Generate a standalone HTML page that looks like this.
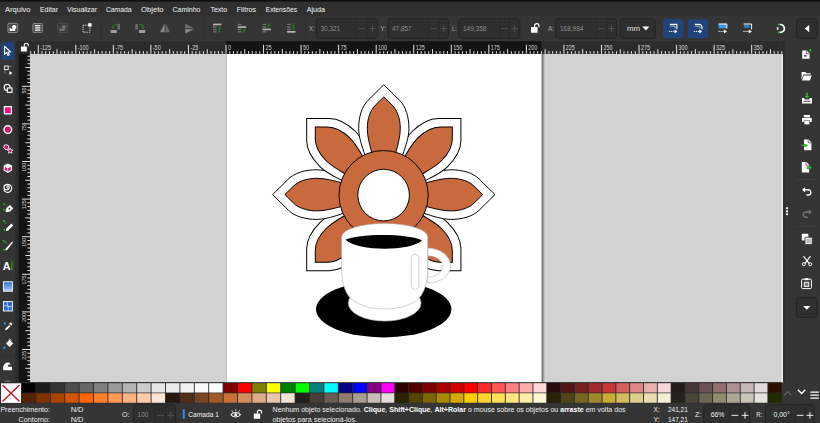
<!DOCTYPE html><html><head><meta charset="utf-8"><title>Inkscape</title><style>html,body{margin:0;padding:0;background:#353535;overflow:hidden}svg{display:block}text{font-family:"Liberation Sans",sans-serif}</style></head><body>
<svg width="820" height="423" viewBox="0 0 820 423">
<rect width="820" height="423" fill="#353535"/>
<rect x="0" y="0" width="820" height="15.5" fill="#303030"/>
<rect x="0" y="0" width="820" height="1.6" fill="#101010"/>
<text x="5" y="11.6" font-size="8" fill="#f4f4f4" textLength="25.5" lengthAdjust="spacingAndGlyphs">Arquivo</text>
<text x="40" y="11.6" font-size="8" fill="#f4f4f4" textLength="18.0" lengthAdjust="spacingAndGlyphs">Editar</text>
<text x="67" y="11.6" font-size="8" fill="#f4f4f4" textLength="30.0" lengthAdjust="spacingAndGlyphs">Visualizar</text>
<text x="106" y="11.6" font-size="8" fill="#f4f4f4" textLength="25.5" lengthAdjust="spacingAndGlyphs">Camada</text>
<text x="141" y="11.6" font-size="8" fill="#f4f4f4" textLength="22.5" lengthAdjust="spacingAndGlyphs">Objeto</text>
<text x="172.5" y="11.6" font-size="8" fill="#f4f4f4" textLength="28.0" lengthAdjust="spacingAndGlyphs">Caminho</text>
<text x="210.5" y="11.6" font-size="8" fill="#f4f4f4" textLength="16.5" lengthAdjust="spacingAndGlyphs">Texto</text>
<text x="236.7" y="11.6" font-size="8" fill="#f4f4f4" textLength="19.3" lengthAdjust="spacingAndGlyphs">Filtros</text>
<text x="265.7" y="11.6" font-size="8" fill="#f4f4f4" textLength="31.3" lengthAdjust="spacingAndGlyphs">Extensões</text>
<text x="306.7" y="11.6" font-size="8" fill="#f4f4f4" textLength="18.3" lengthAdjust="spacingAndGlyphs">Ajuda</text>
<rect x="30" y="54" width="753.3" height="328.3" fill="#d2d2d2"/>
<defs><linearGradient id="sh" x1="0" x2="1" y1="0" y2="0"><stop offset="0" stop-color="#000" stop-opacity="0.5"/><stop offset="1" stop-color="#000" stop-opacity="0"/></linearGradient>
<clipPath id="cv"><rect x="30" y="54" width="753.3" height="328.3"/></clipPath></defs>
<rect x="541.8" y="54" width="3.2" height="328.3" fill="url(#sh)"/>
<rect x="541.3" y="54" width="0.9" height="328.3" fill="#4c4c4c"/>
<rect x="226.2" y="54" width="315.7" height="328.3" fill="#9a9a9a"/>
<rect x="226.7" y="54" width="314.7" height="328.3" fill="#ffffff"/>
<g clip-path="url(#cv)"><g transform="translate(383.8,194.6)" stroke="#000" stroke-width="0.98" stroke-linejoin="miter"><g transform="scale(1.006,0.994)">
<g transform="rotate(180)"><path d="M0,-110.5 L-15.80,-94.70 C-21.60,-88.90 -25.00,-78.50 -25.00,-66.50 C-25.00,-57.50 -21.50,-48.50 -19.00,-40.50 L0,0 L19.00,-40.50 C21.50,-48.50 25.00,-57.50 25.00,-66.50 C25.00,-78.50 21.60,-88.90 15.80,-94.70 L0.00,-110.50 Z" fill="#fff"/><path d="M0,-98.3 L-8.40,-89.90 C-12.80,-85.50 -16.40,-77.30 -16.40,-66.60 C-16.40,-58.30 -14.00,-50.30 -12.00,-42.30 L0,0 L12.00,-42.30 C14.00,-50.30 16.40,-58.30 16.40,-66.60 C16.40,-77.30 12.80,-85.50 8.40,-89.90 L0.00,-98.30 Z" fill="#c8693e"/></g>
<g transform="rotate(135)"><path d="M0,-108.4 L-15.80,-92.60 C-21.60,-86.80 -25.00,-76.40 -25.00,-64.40 C-25.00,-55.40 -21.50,-46.40 -19.00,-38.40 L0,0 L19.00,-38.40 C21.50,-46.40 25.00,-55.40 25.00,-64.40 C25.00,-76.40 21.60,-86.80 15.80,-92.60 L0.00,-108.40 Z" fill="#fff"/><path d="M0,-96.3 L-8.40,-87.90 C-12.80,-83.50 -16.40,-75.30 -16.40,-64.60 C-16.40,-56.30 -14.00,-48.30 -12.00,-40.30 L0,0 L12.00,-40.30 C14.00,-48.30 16.40,-56.30 16.40,-64.60 C16.40,-75.30 12.80,-83.50 8.40,-87.90 L0.00,-96.30 Z" fill="#c8693e"/></g>
<g transform="rotate(225)"><path d="M0,-108.4 L-15.80,-92.60 C-21.60,-86.80 -25.00,-76.40 -25.00,-64.40 C-25.00,-55.40 -21.50,-46.40 -19.00,-38.40 L0,0 L19.00,-38.40 C21.50,-46.40 25.00,-55.40 25.00,-64.40 C25.00,-76.40 21.60,-86.80 15.80,-92.60 L0.00,-108.40 Z" fill="#fff"/><path d="M0,-96.3 L-8.40,-87.90 C-12.80,-83.50 -16.40,-75.30 -16.40,-64.60 C-16.40,-56.30 -14.00,-48.30 -12.00,-40.30 L0,0 L12.00,-40.30 C14.00,-48.30 16.40,-56.30 16.40,-64.60 C16.40,-75.30 12.80,-83.50 8.40,-87.90 L0.00,-96.30 Z" fill="#c8693e"/></g>
<g transform="rotate(90)"><path d="M0,-110.5 L-15.80,-94.70 C-21.60,-88.90 -25.00,-78.50 -25.00,-66.50 C-25.00,-57.50 -21.50,-48.50 -19.00,-40.50 L0,0 L19.00,-40.50 C21.50,-48.50 25.00,-57.50 25.00,-66.50 C25.00,-78.50 21.60,-88.90 15.80,-94.70 L0.00,-110.50 Z" fill="#fff"/><path d="M0,-98.3 L-8.40,-89.90 C-12.80,-85.50 -16.40,-77.30 -16.40,-66.60 C-16.40,-58.30 -14.00,-50.30 -12.00,-42.30 L0,0 L12.00,-42.30 C14.00,-50.30 16.40,-58.30 16.40,-66.60 C16.40,-77.30 12.80,-85.50 8.40,-89.90 L0.00,-98.30 Z" fill="#c8693e"/></g>
<g transform="rotate(270)"><path d="M0,-110.5 L-15.80,-94.70 C-21.60,-88.90 -25.00,-78.50 -25.00,-66.50 C-25.00,-57.50 -21.50,-48.50 -19.00,-40.50 L0,0 L19.00,-40.50 C21.50,-48.50 25.00,-57.50 25.00,-66.50 C25.00,-78.50 21.60,-88.90 15.80,-94.70 L0.00,-110.50 Z" fill="#fff"/><path d="M0,-98.3 L-8.40,-89.90 C-12.80,-85.50 -16.40,-77.30 -16.40,-66.60 C-16.40,-58.30 -14.00,-50.30 -12.00,-42.30 L0,0 L12.00,-42.30 C14.00,-50.30 16.40,-58.30 16.40,-66.60 C16.40,-77.30 12.80,-85.50 8.40,-89.90 L0.00,-98.30 Z" fill="#c8693e"/></g>
<g transform="rotate(45)"><path d="M0,-108.4 L-15.80,-92.60 C-21.60,-86.80 -25.00,-76.40 -25.00,-64.40 C-25.00,-55.40 -21.50,-46.40 -19.00,-38.40 L0,0 L19.00,-38.40 C21.50,-46.40 25.00,-55.40 25.00,-64.40 C25.00,-76.40 21.60,-86.80 15.80,-92.60 L0.00,-108.40 Z" fill="#fff"/><path d="M0,-96.3 L-8.40,-87.90 C-12.80,-83.50 -16.40,-75.30 -16.40,-64.60 C-16.40,-56.30 -14.00,-48.30 -12.00,-40.30 L0,0 L12.00,-40.30 C14.00,-48.30 16.40,-56.30 16.40,-64.60 C16.40,-75.30 12.80,-83.50 8.40,-87.90 L0.00,-96.30 Z" fill="#c8693e"/></g>
<g transform="rotate(315)"><path d="M0,-108.4 L-15.80,-92.60 C-21.60,-86.80 -25.00,-76.40 -25.00,-64.40 C-25.00,-55.40 -21.50,-46.40 -19.00,-38.40 L0,0 L19.00,-38.40 C21.50,-46.40 25.00,-55.40 25.00,-64.40 C25.00,-76.40 21.60,-86.80 15.80,-92.60 L0.00,-108.40 Z" fill="#fff"/><path d="M0,-96.3 L-8.40,-87.90 C-12.80,-83.50 -16.40,-75.30 -16.40,-64.60 C-16.40,-56.30 -14.00,-48.30 -12.00,-40.30 L0,0 L12.00,-40.30 C14.00,-48.30 16.40,-56.30 16.40,-64.60 C16.40,-75.30 12.80,-83.50 8.40,-87.90 L0.00,-96.30 Z" fill="#c8693e"/></g>
<g transform="rotate(0)"><path d="M0,-110.5 L-15.80,-94.70 C-21.60,-88.90 -25.00,-78.50 -25.00,-66.50 C-25.00,-57.50 -21.50,-48.50 -19.00,-40.50 L0,0 L19.00,-40.50 C21.50,-48.50 25.00,-57.50 25.00,-66.50 C25.00,-78.50 21.60,-88.90 15.80,-94.70 L0.00,-110.50 Z" fill="#fff"/><path d="M0,-98.3 L-8.40,-89.90 C-12.80,-85.50 -16.40,-77.30 -16.40,-66.60 C-16.40,-58.30 -14.00,-50.30 -12.00,-42.30 L0,0 L12.00,-42.30 C14.00,-50.30 16.40,-58.30 16.40,-66.60 C16.40,-77.30 12.80,-85.50 8.40,-89.90 L0.00,-98.30 Z" fill="#c8693e"/></g>
</g>
<circle cx="-0.2" cy="0.5" r="44.6" fill="#c8693e"/><circle cx="-0.2" cy="0.5" r="25.8" fill="#fff"/>
</g>
<ellipse cx="383.7" cy="309.2" rx="67.7" ry="28.2" fill="#000"/>
<g fill="#fff" stroke="#b4b4b4" stroke-width="0.6">
<ellipse cx="384.7" cy="303" rx="36.4" ry="18.1"/>
<path fill-rule="evenodd" d="M427.7,248.1 A22.8,17.5 0 0 1 427.7,283.1 Z M427.7,255.7 A14.9,10.8 0 0 1 427.7,277.3 Z"/>
<path d="M341.6,237 A43.05,13.5 0 0 1 427.7,237 L427.7,268 C427.7,285 423.3,295 416.3,300.5 C407.3,306.5 396.3,309 384.65,309 C373,309 362,306.5 353,300.5 C346,295 341.6,285 341.6,268 Z"/>
<rect x="411.3" y="254.2" width="7.6" height="35.2" rx="3.8"/>
</g>
<path d="M345.4,239.8 C358,233.2 410,233.2 422,240.5 C410,251.6 358,251.6 345.4,239.8 Z" fill="#000"/>
</g>
<rect x="17.6" y="41.2" width="765.6999999999999" height="12.599999999999994" fill="#2c2c2c"/>
<rect x="225.9" y="41.2" width="315.5" height="12.599999999999994" fill="#141414"/>
<rect x="18.2" y="53.8" width="11.8" height="328.5" fill="#141414"/>
<text x="40.15" y="49.6" font-size="6.3" fill="#d6d6d6" textLength="10.9" lengthAdjust="spacingAndGlyphs">-125</text>
<text x="77.70" y="49.6" font-size="6.3" fill="#d6d6d6" textLength="10.9" lengthAdjust="spacingAndGlyphs">-100</text>
<text x="115.25" y="49.6" font-size="6.3" fill="#d6d6d6" textLength="7.9" lengthAdjust="spacingAndGlyphs">-75</text>
<text x="152.80" y="49.6" font-size="6.3" fill="#d6d6d6" textLength="7.9" lengthAdjust="spacingAndGlyphs">-50</text>
<text x="190.35" y="49.6" font-size="6.3" fill="#d6d6d6" textLength="7.9" lengthAdjust="spacingAndGlyphs">-25</text>
<text x="227.90" y="49.6" font-size="6.3" fill="#d6d6d6" textLength="3.0" lengthAdjust="spacingAndGlyphs">0</text>
<text x="265.45" y="49.6" font-size="6.3" fill="#d6d6d6" textLength="6.0" lengthAdjust="spacingAndGlyphs">25</text>
<text x="303.00" y="49.6" font-size="6.3" fill="#d6d6d6" textLength="6.0" lengthAdjust="spacingAndGlyphs">50</text>
<text x="340.55" y="49.6" font-size="6.3" fill="#d6d6d6" textLength="6.0" lengthAdjust="spacingAndGlyphs">75</text>
<text x="378.10" y="49.6" font-size="6.3" fill="#d6d6d6" textLength="9.0" lengthAdjust="spacingAndGlyphs">100</text>
<text x="415.65" y="49.6" font-size="6.3" fill="#d6d6d6" textLength="9.0" lengthAdjust="spacingAndGlyphs">125</text>
<text x="453.20" y="49.6" font-size="6.3" fill="#d6d6d6" textLength="9.0" lengthAdjust="spacingAndGlyphs">150</text>
<text x="490.75" y="49.6" font-size="6.3" fill="#d6d6d6" textLength="9.0" lengthAdjust="spacingAndGlyphs">175</text>
<text x="528.30" y="49.6" font-size="6.3" fill="#d6d6d6" textLength="9.0" lengthAdjust="spacingAndGlyphs">200</text>
<text x="565.85" y="49.6" font-size="6.3" fill="#d6d6d6" textLength="9.0" lengthAdjust="spacingAndGlyphs">225</text>
<text x="603.40" y="49.6" font-size="6.3" fill="#d6d6d6" textLength="9.0" lengthAdjust="spacingAndGlyphs">250</text>
<text x="640.95" y="49.6" font-size="6.3" fill="#d6d6d6" textLength="9.0" lengthAdjust="spacingAndGlyphs">275</text>
<text x="678.50" y="49.6" font-size="6.3" fill="#d6d6d6" textLength="9.0" lengthAdjust="spacingAndGlyphs">300</text>
<text x="716.05" y="49.6" font-size="6.3" fill="#d6d6d6" textLength="9.0" lengthAdjust="spacingAndGlyphs">325</text>
<text x="753.60" y="49.6" font-size="6.3" fill="#d6d6d6" textLength="9.0" lengthAdjust="spacingAndGlyphs">350</text>
<path d="M30.74,53.8v-2.6 M34.50,53.8v-2.6 M38.25,53.8v-9 M42.00,53.8v-2.6 M45.76,53.8v-2.6 M49.51,53.8v-2.6 M53.27,53.8v-2.6 M57.03,53.8v-4.6 M60.78,53.8v-2.6 M64.53,53.8v-2.6 M68.29,53.8v-2.6 M72.04,53.8v-2.6 M75.80,53.8v-9 M79.56,53.8v-2.6 M83.31,53.8v-2.6 M87.06,53.8v-2.6 M90.82,53.8v-2.6 M94.57,53.8v-4.6 M98.33,53.8v-2.6 M102.08,53.8v-2.6 M105.84,53.8v-2.6 M109.59,53.8v-2.6 M113.35,53.8v-9 M117.11,53.8v-2.6 M120.86,53.8v-2.6 M124.61,53.8v-2.6 M128.37,53.8v-2.6 M132.12,53.8v-4.6 M135.88,53.8v-2.6 M139.63,53.8v-2.6 M143.39,53.8v-2.6 M147.14,53.8v-2.6 M150.90,53.8v-9 M154.66,53.8v-2.6 M158.41,53.8v-2.6 M162.16,53.8v-2.6 M165.92,53.8v-2.6 M169.68,53.8v-4.6 M173.43,53.8v-2.6 M177.19,53.8v-2.6 M180.94,53.8v-2.6 M184.69,53.8v-2.6 M188.45,53.8v-9 M192.20,53.8v-2.6 M195.96,53.8v-2.6 M199.72,53.8v-2.6 M203.47,53.8v-2.6 M207.22,53.8v-4.6 M210.98,53.8v-2.6 M214.74,53.8v-2.6 M218.49,53.8v-2.6 M222.25,53.8v-2.6 M226.00,53.8v-9 M229.75,53.8v-2.6 M233.51,53.8v-2.6 M237.26,53.8v-2.6 M241.02,53.8v-2.6 M244.78,53.8v-4.6 M248.53,53.8v-2.6 M252.28,53.8v-2.6 M256.04,53.8v-2.6 M259.80,53.8v-2.6 M263.55,53.8v-9 M267.31,53.8v-2.6 M271.06,53.8v-2.6 M274.81,53.8v-2.6 M278.57,53.8v-2.6 M282.32,53.8v-4.6 M286.08,53.8v-2.6 M289.83,53.8v-2.6 M293.59,53.8v-2.6 M297.35,53.8v-2.6 M301.10,53.8v-9 M304.86,53.8v-2.6 M308.61,53.8v-2.6 M312.37,53.8v-2.6 M316.12,53.8v-2.6 M319.88,53.8v-4.6 M323.63,53.8v-2.6 M327.38,53.8v-2.6 M331.14,53.8v-2.6 M334.89,53.8v-2.6 M338.65,53.8v-9 M342.40,53.8v-2.6 M346.16,53.8v-2.6 M349.92,53.8v-2.6 M353.67,53.8v-2.6 M357.43,53.8v-4.6 M361.18,53.8v-2.6 M364.94,53.8v-2.6 M368.69,53.8v-2.6 M372.44,53.8v-2.6 M376.20,53.8v-9 M379.96,53.8v-2.6 M383.71,53.8v-2.6 M387.47,53.8v-2.6 M391.22,53.8v-2.6 M394.98,53.8v-4.6 M398.73,53.8v-2.6 M402.49,53.8v-2.6 M406.24,53.8v-2.6 M410.00,53.8v-2.6 M413.75,53.8v-9 M417.50,53.8v-2.6 M421.26,53.8v-2.6 M425.01,53.8v-2.6 M428.77,53.8v-2.6 M432.52,53.8v-4.6 M436.28,53.8v-2.6 M440.03,53.8v-2.6 M443.79,53.8v-2.6 M447.54,53.8v-2.6 M451.30,53.8v-9 M455.06,53.8v-2.6 M458.81,53.8v-2.6 M462.56,53.8v-2.6 M466.32,53.8v-2.6 M470.07,53.8v-4.6 M473.83,53.8v-2.6 M477.59,53.8v-2.6 M481.34,53.8v-2.6 M485.10,53.8v-2.6 M488.85,53.8v-9 M492.61,53.8v-2.6 M496.36,53.8v-2.6 M500.12,53.8v-2.6 M503.87,53.8v-2.6 M507.62,53.8v-4.6 M511.38,53.8v-2.6 M515.13,53.8v-2.6 M518.89,53.8v-2.6 M522.64,53.8v-2.6 M526.40,53.8v-9 M530.15,53.8v-2.6 M533.91,53.8v-2.6 M537.66,53.8v-2.6 M541.42,53.8v-2.6 M545.17,53.8v-4.6 M548.93,53.8v-2.6 M552.68,53.8v-2.6 M556.44,53.8v-2.6 M560.19,53.8v-2.6 M563.95,53.8v-9 M567.70,53.8v-2.6 M571.46,53.8v-2.6 M575.21,53.8v-2.6 M578.97,53.8v-2.6 M582.73,53.8v-4.6 M586.48,53.8v-2.6 M590.24,53.8v-2.6 M593.99,53.8v-2.6 M597.75,53.8v-2.6 M601.50,53.8v-9 M605.25,53.8v-2.6 M609.01,53.8v-2.6 M612.76,53.8v-2.6 M616.52,53.8v-2.6 M620.27,53.8v-4.6 M624.03,53.8v-2.6 M627.79,53.8v-2.6 M631.54,53.8v-2.6 M635.30,53.8v-2.6 M639.05,53.8v-9 M642.81,53.8v-2.6 M646.56,53.8v-2.6 M650.32,53.8v-2.6 M654.07,53.8v-2.6 M657.83,53.8v-4.6 M661.58,53.8v-2.6 M665.34,53.8v-2.6 M669.09,53.8v-2.6 M672.85,53.8v-2.6 M676.60,53.8v-9 M680.36,53.8v-2.6 M684.11,53.8v-2.6 M687.87,53.8v-2.6 M691.62,53.8v-2.6 M695.38,53.8v-4.6 M699.13,53.8v-2.6 M702.88,53.8v-2.6 M706.64,53.8v-2.6 M710.39,53.8v-2.6 M714.15,53.8v-9 M717.90,53.8v-2.6 M721.66,53.8v-2.6 M725.41,53.8v-2.6 M729.17,53.8v-2.6 M732.92,53.8v-4.6 M736.68,53.8v-2.6 M740.43,53.8v-2.6 M744.19,53.8v-2.6 M747.95,53.8v-2.6 M751.70,53.8v-9 M755.46,53.8v-2.6 M759.21,53.8v-2.6 M762.97,53.8v-2.6 M766.72,53.8v-2.6 M770.48,53.8v-4.6 M774.23,53.8v-2.6 M777.99,53.8v-2.6 M781.74,53.8v-2.6" stroke="#ffffff" stroke-width="0.9" fill="none"/>
<text transform="translate(25.8,87.50) rotate(-90)" text-anchor="end" font-size="6.2" fill="#d6d6d6" textLength="6.0" lengthAdjust="spacingAndGlyphs">50</text>
<text transform="translate(25.8,125.10) rotate(-90)" text-anchor="end" font-size="6.2" fill="#d6d6d6" textLength="6.0" lengthAdjust="spacingAndGlyphs">75</text>
<text transform="translate(25.8,162.70) rotate(-90)" text-anchor="end" font-size="6.2" fill="#d6d6d6" textLength="9.0" lengthAdjust="spacingAndGlyphs">100</text>
<text transform="translate(25.8,200.30) rotate(-90)" text-anchor="end" font-size="6.2" fill="#d6d6d6" textLength="9.0" lengthAdjust="spacingAndGlyphs">125</text>
<text transform="translate(25.8,237.90) rotate(-90)" text-anchor="end" font-size="6.2" fill="#d6d6d6" textLength="9.0" lengthAdjust="spacingAndGlyphs">150</text>
<text transform="translate(25.8,275.50) rotate(-90)" text-anchor="end" font-size="6.2" fill="#d6d6d6" textLength="9.0" lengthAdjust="spacingAndGlyphs">175</text>
<text transform="translate(25.8,313.10) rotate(-90)" text-anchor="end" font-size="6.2" fill="#d6d6d6" textLength="9.0" lengthAdjust="spacingAndGlyphs">200</text>
<text transform="translate(25.8,350.70) rotate(-90)" text-anchor="end" font-size="6.2" fill="#d6d6d6" textLength="9.0" lengthAdjust="spacingAndGlyphs">225</text>
<path d="M30,56.22h-2.6 M30,59.98h-2.6 M30,63.74h-2.6 M30,67.50h-4.6 M30,71.26h-2.6 M30,75.02h-2.6 M30,78.78h-2.6 M30,82.54h-2.6 M30,86.30h-8 M30,90.06h-2.6 M30,93.82h-2.6 M30,97.58h-2.6 M30,101.34h-2.6 M30,105.10h-4.6 M30,108.86h-2.6 M30,112.62h-2.6 M30,116.38h-2.6 M30,120.14h-2.6 M30,123.90h-8 M30,127.66h-2.6 M30,131.42h-2.6 M30,135.18h-2.6 M30,138.94h-2.6 M30,142.70h-4.6 M30,146.46h-2.6 M30,150.22h-2.6 M30,153.98h-2.6 M30,157.74h-2.6 M30,161.50h-8 M30,165.26h-2.6 M30,169.02h-2.6 M30,172.78h-2.6 M30,176.54h-2.6 M30,180.30h-4.6 M30,184.06h-2.6 M30,187.82h-2.6 M30,191.58h-2.6 M30,195.34h-2.6 M30,199.10h-8 M30,202.86h-2.6 M30,206.62h-2.6 M30,210.38h-2.6 M30,214.14h-2.6 M30,217.90h-4.6 M30,221.66h-2.6 M30,225.42h-2.6 M30,229.18h-2.6 M30,232.94h-2.6 M30,236.70h-8 M30,240.46h-2.6 M30,244.22h-2.6 M30,247.98h-2.6 M30,251.74h-2.6 M30,255.50h-4.6 M30,259.26h-2.6 M30,263.02h-2.6 M30,266.78h-2.6 M30,270.54h-2.6 M30,274.30h-8 M30,278.06h-2.6 M30,281.82h-2.6 M30,285.58h-2.6 M30,289.34h-2.6 M30,293.10h-4.6 M30,296.86h-2.6 M30,300.62h-2.6 M30,304.38h-2.6 M30,308.14h-2.6 M30,311.90h-8 M30,315.66h-2.6 M30,319.42h-2.6 M30,323.18h-2.6 M30,326.94h-2.6 M30,330.70h-4.6 M30,334.46h-2.6 M30,338.22h-2.6 M30,341.98h-2.6 M30,345.74h-2.6 M30,349.50h-8 M30,353.26h-2.6 M30,357.02h-2.6 M30,360.78h-2.6 M30,364.54h-2.6 M30,368.30h-4.6 M30,372.06h-2.6 M30,375.82h-2.6 M30,379.58h-2.6" stroke="#ffffff" stroke-width="0.9" fill="none"/>
<rect x="0" y="382.3" width="782" height="21" fill="#2a2a2a"/>
<rect x="21.95" y="383.2" width="13.50" height="9.35" fill="#000000"/>
<rect x="21.95" y="393.25" width="13.50" height="9.5" fill="#552200"/>
<rect x="36.35" y="383.2" width="13.50" height="9.35" fill="#1a1a1a"/>
<rect x="36.35" y="393.25" width="13.50" height="9.5" fill="#803300"/>
<rect x="50.75" y="383.2" width="13.50" height="9.35" fill="#333333"/>
<rect x="50.75" y="393.25" width="13.50" height="9.5" fill="#aa4400"/>
<rect x="65.15" y="383.2" width="13.50" height="9.35" fill="#4d4d4d"/>
<rect x="65.15" y="393.25" width="13.50" height="9.5" fill="#d45500"/>
<rect x="79.55" y="383.2" width="13.50" height="9.35" fill="#666666"/>
<rect x="79.55" y="393.25" width="13.50" height="9.5" fill="#ff6600"/>
<rect x="93.95" y="383.2" width="13.50" height="9.35" fill="#808080"/>
<rect x="93.95" y="393.25" width="13.50" height="9.5" fill="#ff7f2a"/>
<rect x="108.35" y="383.2" width="13.50" height="9.35" fill="#999999"/>
<rect x="108.35" y="393.25" width="13.50" height="9.5" fill="#ff9955"/>
<rect x="122.75" y="383.2" width="13.50" height="9.35" fill="#b3b3b3"/>
<rect x="122.75" y="393.25" width="13.50" height="9.5" fill="#ffb380"/>
<rect x="137.15" y="383.2" width="13.50" height="9.35" fill="#cccccc"/>
<rect x="137.15" y="393.25" width="13.50" height="9.5" fill="#ffccaa"/>
<rect x="151.55" y="383.2" width="13.50" height="9.35" fill="#e6e6e6"/>
<rect x="151.55" y="393.25" width="13.50" height="9.5" fill="#ffe6d5"/>
<rect x="165.95" y="383.2" width="13.50" height="9.35" fill="#ececec"/>
<rect x="165.95" y="393.25" width="13.50" height="9.5" fill="#28170b"/>
<rect x="180.35" y="383.2" width="13.50" height="9.35" fill="#f2f2f2"/>
<rect x="180.35" y="393.25" width="13.50" height="9.5" fill="#502d16"/>
<rect x="194.75" y="383.2" width="13.50" height="9.35" fill="#f9f9f9"/>
<rect x="194.75" y="393.25" width="13.50" height="9.5" fill="#784421"/>
<rect x="209.15" y="383.2" width="13.50" height="9.35" fill="#ffffff"/>
<rect x="209.15" y="393.25" width="13.50" height="9.5" fill="#a05a2c"/>
<rect x="223.55" y="383.2" width="13.50" height="9.35" fill="#800000"/>
<rect x="223.55" y="393.25" width="13.50" height="9.5" fill="#c87137"/>
<rect x="237.95" y="383.2" width="13.50" height="9.35" fill="#ff0000"/>
<rect x="237.95" y="393.25" width="13.50" height="9.5" fill="#d38d5f"/>
<rect x="252.35" y="383.2" width="13.50" height="9.35" fill="#808000"/>
<rect x="252.35" y="393.25" width="13.50" height="9.5" fill="#deaa87"/>
<rect x="266.75" y="383.2" width="13.50" height="9.35" fill="#ffff00"/>
<rect x="266.75" y="393.25" width="13.50" height="9.5" fill="#e9c6af"/>
<rect x="281.15" y="383.2" width="13.50" height="9.35" fill="#008000"/>
<rect x="281.15" y="393.25" width="13.50" height="9.5" fill="#f4e3d7"/>
<rect x="295.55" y="383.2" width="13.50" height="9.35" fill="#00ff00"/>
<rect x="295.55" y="393.25" width="13.50" height="9.5" fill="#241f1c"/>
<rect x="309.95" y="383.2" width="13.50" height="9.35" fill="#008080"/>
<rect x="309.95" y="393.25" width="13.50" height="9.5" fill="#483e37"/>
<rect x="324.35" y="383.2" width="13.50" height="9.35" fill="#00ffff"/>
<rect x="324.35" y="393.25" width="13.50" height="9.5" fill="#6c5d53"/>
<rect x="338.75" y="383.2" width="13.50" height="9.35" fill="#000080"/>
<rect x="338.75" y="393.25" width="13.50" height="9.5" fill="#917c6f"/>
<rect x="353.15" y="383.2" width="13.50" height="9.35" fill="#0000ff"/>
<rect x="353.15" y="393.25" width="13.50" height="9.5" fill="#ac9d93"/>
<rect x="367.55" y="383.2" width="12.92" height="9.35" fill="#800080"/>
<rect x="367.55" y="393.25" width="12.92" height="9.5" fill="#c8beb7"/>
<rect x="381.37" y="383.2" width="12.92" height="9.35" fill="#ff00ff"/>
<rect x="381.37" y="393.25" width="12.92" height="9.5" fill="#e3dedb"/>
<rect x="395.19" y="383.2" width="12.92" height="9.35" fill="#2b0000"/>
<rect x="395.19" y="393.25" width="12.92" height="9.5" fill="#2b2200"/>
<rect x="409.01" y="383.2" width="12.92" height="9.35" fill="#550000"/>
<rect x="409.01" y="393.25" width="12.92" height="9.5" fill="#554400"/>
<rect x="422.83" y="383.2" width="12.92" height="9.35" fill="#800000"/>
<rect x="422.83" y="393.25" width="12.92" height="9.5" fill="#806600"/>
<rect x="436.65" y="383.2" width="12.92" height="9.35" fill="#aa0000"/>
<rect x="436.65" y="393.25" width="12.92" height="9.5" fill="#aa8800"/>
<rect x="450.47" y="383.2" width="12.92" height="9.35" fill="#d40000"/>
<rect x="450.47" y="393.25" width="12.92" height="9.5" fill="#d4aa00"/>
<rect x="464.29" y="383.2" width="12.92" height="9.35" fill="#ff0000"/>
<rect x="464.29" y="393.25" width="12.92" height="9.5" fill="#ffcc00"/>
<rect x="478.11" y="383.2" width="12.92" height="9.35" fill="#ff2a2a"/>
<rect x="478.11" y="393.25" width="12.92" height="9.5" fill="#ffd42a"/>
<rect x="491.93" y="383.2" width="12.92" height="9.35" fill="#ff5555"/>
<rect x="491.93" y="393.25" width="12.92" height="9.5" fill="#ffdd55"/>
<rect x="505.75" y="383.2" width="12.92" height="9.35" fill="#ff8080"/>
<rect x="505.75" y="393.25" width="12.92" height="9.5" fill="#ffe680"/>
<rect x="519.57" y="383.2" width="12.92" height="9.35" fill="#ffaaaa"/>
<rect x="519.57" y="393.25" width="12.92" height="9.5" fill="#ffeeaa"/>
<rect x="533.39" y="383.2" width="12.92" height="9.35" fill="#ffd5d5"/>
<rect x="533.39" y="393.25" width="12.92" height="9.5" fill="#fff6d5"/>
<rect x="547.21" y="383.2" width="12.92" height="9.35" fill="#280b0b"/>
<rect x="547.21" y="393.25" width="12.92" height="9.5" fill="#28220b"/>
<rect x="561.03" y="383.2" width="12.92" height="9.35" fill="#501616"/>
<rect x="561.03" y="393.25" width="12.92" height="9.5" fill="#504416"/>
<rect x="574.85" y="383.2" width="12.92" height="9.35" fill="#782121"/>
<rect x="574.85" y="393.25" width="12.92" height="9.5" fill="#786721"/>
<rect x="588.67" y="383.2" width="12.92" height="9.35" fill="#a02c2c"/>
<rect x="588.67" y="393.25" width="12.92" height="9.5" fill="#a0892c"/>
<rect x="602.49" y="383.2" width="12.92" height="9.35" fill="#c83737"/>
<rect x="602.49" y="393.25" width="12.92" height="9.5" fill="#c8ab37"/>
<rect x="616.31" y="383.2" width="12.92" height="9.35" fill="#d35f5f"/>
<rect x="616.31" y="393.25" width="12.92" height="9.5" fill="#d3bc5f"/>
<rect x="630.13" y="383.2" width="12.92" height="9.35" fill="#de8787"/>
<rect x="630.13" y="393.25" width="12.92" height="9.5" fill="#decd87"/>
<rect x="643.95" y="383.2" width="12.92" height="9.35" fill="#e9afaf"/>
<rect x="643.95" y="393.25" width="12.92" height="9.5" fill="#e9ddaf"/>
<rect x="657.77" y="383.2" width="12.92" height="9.35" fill="#f4d7d7"/>
<rect x="657.77" y="393.25" width="12.92" height="9.5" fill="#f4eed7"/>
<rect x="671.59" y="383.2" width="12.92" height="9.35" fill="#241c1c"/>
<rect x="671.59" y="393.25" width="12.92" height="9.5" fill="#24221c"/>
<rect x="685.41" y="383.2" width="12.92" height="9.35" fill="#483737"/>
<rect x="685.41" y="393.25" width="12.92" height="9.5" fill="#484537"/>
<rect x="699.23" y="383.2" width="12.92" height="9.35" fill="#6c5353"/>
<rect x="699.23" y="393.25" width="12.92" height="9.5" fill="#6c6753"/>
<rect x="713.05" y="383.2" width="12.92" height="9.35" fill="#916f6f"/>
<rect x="713.05" y="393.25" width="12.92" height="9.5" fill="#918a6f"/>
<rect x="726.87" y="383.2" width="12.92" height="9.35" fill="#ac9393"/>
<rect x="726.87" y="393.25" width="12.92" height="9.5" fill="#aca793"/>
<rect x="740.69" y="383.2" width="12.92" height="9.35" fill="#c8b7b7"/>
<rect x="740.69" y="393.25" width="12.92" height="9.5" fill="#c8c4b7"/>
<rect x="754.51" y="383.2" width="12.92" height="9.35" fill="#e3dbdb"/>
<rect x="754.51" y="393.25" width="12.92" height="9.5" fill="#e3e2db"/>
<rect x="768.33" y="383.2" width="12.92" height="9.35" fill="#2b1100"/>
<rect x="768.33" y="393.25" width="12.92" height="9.5" fill="#222b00"/>
<rect x="1" y="383.3" width="20" height="19.6" fill="#fff"/><path d="M2.5,385 L19.5,401.5 M19.5,385 L2.5,401.5" stroke="#c4142a" stroke-width="1.4" fill="none"/>
<rect x="781.6" y="54" width="1.5" height="328.3" fill="#ececec"/><rect x="783.1" y="41.2" width="1.4" height="341" fill="#282828"/>
<rect x="15.6" y="41.2" width="3" height="341.1" fill="#2a2a2a"/>
<rect x="18.2" y="41.2" width="11.8" height="12.6" fill="#2a2a2a"/>
<g fill="#fff"><rect x="20.9" y="46.4" width="6" height="5.2" rx="0.6"/></g><path d="M24.3,46.6 v-1.4 a2,2 0 0 1 4,0 v1" fill="none" stroke="#fff" stroke-width="1.1"/>
<rect x="100.89999999999999" y="19.5" width="0.8" height="18.5" fill="#2e2e2e"/>
<rect x="203.6" y="19.5" width="0.8" height="18.5" fill="#2e2e2e"/>
<rect x="305.0" y="19.5" width="0.8" height="18.5" fill="#2e2e2e"/>
<text x="309" y="30.6" font-size="7.6" fill="#a8a8a8" textLength="5.6" lengthAdjust="spacingAndGlyphs">X:</text>
<rect x="316.4" y="18.6" width="61.200000000000045" height="20.0" rx="3" fill="#2f2f2f" stroke="#222" stroke-width="0.9"/>
<path d="M356.1,19.1V38.1M367.5,19.1V38.1" stroke="#262626" stroke-width="0.7"/>
<text x="320.5" y="30.6" font-size="7.6" fill="#8e8e8e" textLength="19.6" lengthAdjust="spacingAndGlyphs">30,321</text>
<path d="M358.40000000000003,28.6h6.8M369.15000000000003,28.6h6.8M372.55,25.200000000000003v6.8" stroke="#525252" stroke-width="0.9"/>
<text x="380.5" y="30.6" font-size="7.6" fill="#a8a8a8" textLength="5.6" lengthAdjust="spacingAndGlyphs">Y:</text>
<rect x="388" y="18.6" width="60.30000000000001" height="20.0" rx="3" fill="#2f2f2f" stroke="#222" stroke-width="0.9"/>
<path d="M428.5,19.1V38.1M439.2,19.1V38.1" stroke="#262626" stroke-width="0.7"/>
<text x="392" y="30.6" font-size="7.6" fill="#8e8e8e" textLength="19.6" lengthAdjust="spacingAndGlyphs">47,857</text>
<path d="M430.45000000000005,28.6h6.8M440.35,28.6h6.8M443.75,25.200000000000003v6.8" stroke="#525252" stroke-width="0.9"/>
<text x="452" y="30.6" font-size="7.6" fill="#a8a8a8" textLength="4.8" lengthAdjust="spacingAndGlyphs">L:</text>
<rect x="459" y="18.6" width="60.89999999999998" height="20.0" rx="3" fill="#2f2f2f" stroke="#222" stroke-width="0.9"/>
<path d="M499.6,19.1V38.1M509.4,19.1V38.1" stroke="#262626" stroke-width="0.7"/>
<text x="463" y="30.6" font-size="7.6" fill="#8e8e8e" textLength="23.4" lengthAdjust="spacingAndGlyphs">149,358</text>
<path d="M501.1,28.6h6.8M511.25,28.6h6.8M514.65,25.200000000000003v6.8" stroke="#525252" stroke-width="0.9"/>
<text x="548" y="30.6" font-size="7.6" fill="#a8a8a8" textLength="5.8" lengthAdjust="spacingAndGlyphs">A:</text>
<rect x="555.7" y="18.6" width="60.69999999999993" height="20.0" rx="3" fill="#2f2f2f" stroke="#222" stroke-width="0.9"/>
<path d="M596.3,19.1V38.1M606.7,19.1V38.1" stroke="#262626" stroke-width="0.7"/>
<text x="560" y="30.6" font-size="7.6" fill="#8e8e8e" textLength="23.4" lengthAdjust="spacingAndGlyphs">168,984</text>
<path d="M598.1,28.6h6.8M608.15,28.6h6.8M611.55,25.200000000000003v6.8" stroke="#525252" stroke-width="0.9"/>
<rect x="531" y="27" width="6.6" height="5.8" rx="0.6" fill="#fff"/><path d="M534.6,27.2 v-1.3 a2.2,2.2 0 0 1 4.4,0 v1.3" fill="none" stroke="#fff" stroke-width="1.2"/>
<rect x="620.4" y="18.6" width="34.89999999999998" height="20.0" rx="3" fill="#2f2f2f" stroke="#222" stroke-width="0.9"/>
<text x="627" y="30.6" font-size="7.6" fill="#e0e0e0" textLength="13.0" lengthAdjust="spacingAndGlyphs">mm</text>
<path d="M642.4,26.6 h7 l-3.5,4 z" fill="#fff"/>
<rect x="663" y="19.1" width="20.5" height="19.1" rx="2.6" fill="#20437a"/>
<rect x="688" y="19.1" width="20" height="19.1" rx="2.6" fill="#20437a"/>
<path d="M669.9,24.400000000000002h7v4.8" fill="none" stroke="#fff" stroke-width="1.1"/>
<path d="M669.9,26.200000000000003h5.2v2" fill="none" stroke="#cfd8e8" stroke-width="0.8"/>
<path d="M669.0999999999999,31.400000000000002h6" stroke="#fff" stroke-width="1" stroke-dasharray="1.2,0.8"/><path d="M674.5,29.400000000000002l3,2l-3,2z" fill="#fff"/>
<path d="M694.8,24.400000000000002h4a3.2,3.2 0 0 1 3.2,3.2v1.6" fill="none" stroke="#fff" stroke-width="1.1"/>
<path d="M694.8,26.200000000000003h3.4a2,2 0 0 1 2,2v0.4" fill="none" stroke="#cfd8e8" stroke-width="0.8"/>
<path d="M693.8,31.400000000000002h6" stroke="#fff" stroke-width="1" stroke-dasharray="1.2,0.8"/><path d="M699.2,29.400000000000002l3,2l-3,2z" fill="#fff"/>
<rect x="718.5999999999999" y="23.799999999999997" width="8" height="4.6" fill="#3d9ae8"/><path d="M718.5999999999999,24.0h8.2v4.6" fill="none" stroke="#fff" stroke-width="1"/>
<path d="M718.5999999999999,31.4h5.6" stroke="#fff" stroke-width="1" stroke-dasharray="1.2,0.8"/><path d="M724.0,29.4l3,2l-3,2z" fill="#fff"/>
<rect x="744.2" y="24.799999999999997" width="5.4" height="3" fill="#2f7fd0"/><path d="M743.6,24.0h8v5.4" fill="none" stroke="#fff" stroke-width="1"/>
<path d="M743.4,31.4h5.6" stroke="#fff" stroke-width="1" stroke-dasharray="1.2,0.8"/><path d="M748.8000000000001,29.4l3,2l-3,2z" fill="#fff"/>
<path d="M779.6,24.6 a3.9,3.9 0 1 1 0,7.6" fill="none" stroke="#fff" stroke-width="1.7"/><path d="M777.6,27 v3" stroke="#ddd" stroke-width="1.6"/><circle cx="778.6" cy="24.3" r="0.9" fill="#22c022"/><circle cx="778.6" cy="32.4" r="0.9" fill="#22c022"/>
<rect x="796.5" y="18.6" width="20.899999999999977" height="20.0" rx="3" fill="#2f2f2f" stroke="#222" stroke-width="0.9"/>
<path d="M809.2,25 v7.2 l-4.4,-3.6 z" fill="#fff"/>
<g opacity="1"><rect x="7.9" y="23.299999999999997" width="9.8" height="9.2" rx="0.8" fill="#4a4a4a" stroke="#9c9c9c" stroke-width="0.8"/><circle cx="14.200000000000001" cy="27.099999999999998" r="2.2" fill="#fff"/><path d="M9.600000000000001,31.099999999999998v-3.4l2.4,1.4h3.2v2z" fill="#fff"/></g>
<rect x="33" y="23.5" width="9.4" height="8.9" rx="0.8" fill="#4a4a4a" stroke="#9c9c9c" stroke-width="0.8"/><path d="M35,25.6h5.4M35,27.9h5.4M35,30.2h5.4" stroke="#fff" stroke-width="1.2"/>
<g opacity="0.28"><rect x="57.5" y="23.299999999999997" width="9.8" height="9.2" rx="0.8" fill="#4a4a4a" stroke="#9c9c9c" stroke-width="0.8"/><circle cx="63.8" cy="27.099999999999998" r="2.2" fill="#fff"/><path d="M59.199999999999996,31.099999999999998v-3.4l2.4,1.4h3.2v2z" fill="#fff"/></g>
<rect x="83" y="25.2" width="7" height="7" fill="none" stroke="#e6e6e6" stroke-width="0.9" stroke-dasharray="1.4,0.9"/><rect x="88.2" y="23.2" width="3.4" height="3.4" fill="#fff"/>
<rect x="110.6" y="30" width="6.2" height="3" fill="#9c9c9c"/><rect x="117.2" y="23.8" width="2.8" height="5.8" fill="#666"/><path d="M112.6,28.6 a4.4,4.4 0 0 1 4.2,-4.2" fill="none" stroke="#1c7a28" stroke-width="1.4"/><path d="M111.2,27.2h3l-1.5,2.4z" fill="#1c7a28"/>
<rect x="139" y="30" width="6.2" height="3" fill="#9c9c9c"/><rect x="135.2" y="23.8" width="2.8" height="5.8" fill="#666"/><path d="M143.4,28.6 a4.4,4.4 0 0 0 -4.2,-4.2" fill="none" stroke="#1c7a28" stroke-width="1.4"/><path d="M144.8,27.2h-3l1.5,2.4z" fill="#1c7a28"/>
<path d="M164.6,23.6v8.6h-4.4z" fill="#8a8a8a"/><path d="M165.6,23.6v8.6h4.4z" fill="#6a6a6a"/><path d="M165.1,22.6v10.8" stroke="#555" stroke-width="0.6" stroke-dasharray="1,1"/>
<path d="M185.2,28.2h8.8l-8.8,-4.4z" fill="#6a6a6a"/><path d="M185.2,29.2h8.8l-8.8,4.4z" fill="#8a8a8a"/><path d="M184.4,28.7h10.8" stroke="#555" stroke-width="0.6" stroke-dasharray="1,1"/>
<rect x="213.0" y="23.599999999999998" width="8.4" height="1.7" fill="#b4b4b4"/>
<rect x="213.0" y="26.4" width="3.6" height="1.2" fill="#777"/>
<rect x="213.0" y="28.799999999999997" width="3.6" height="1.2" fill="#777"/>
<rect x="213.0" y="31.2" width="3.6" height="1.2" fill="#777"/>
<path d="M219.4,32.6v-4.6" stroke="#1c7a28" stroke-width="1.3"/><path d="M217.6,28.6h3.6l-1.8,-2.4z" fill="#1c7a28"/>
<rect x="237.70000000000002" y="23.799999999999997" width="3.6" height="1.2" fill="#777"/>
<rect x="237.70000000000002" y="26.2" width="8.4" height="1.7" fill="#b4b4b4"/>
<rect x="237.70000000000002" y="28.799999999999997" width="3.6" height="1.2" fill="#777"/>
<rect x="237.70000000000002" y="31.2" width="3.6" height="1.2" fill="#777"/>
<path d="M244.1,32.6v-2.6" stroke="#1c7a28" stroke-width="1.3"/><path d="M242.3,30.4h3.6l-1.8,-2.2z" fill="#1c7a28"/>
<rect x="262.5" y="23.799999999999997" width="3.6" height="1.2" fill="#777"/>
<rect x="262.5" y="26.4" width="3.6" height="1.2" fill="#777"/>
<rect x="262.5" y="28.599999999999998" width="8.4" height="1.7" fill="#b4b4b4"/>
<rect x="262.5" y="31.2" width="3.6" height="1.2" fill="#777"/>
<path d="M268.9,23.4v2.6" stroke="#1c7a28" stroke-width="1.3"/><path d="M267.1,25.6h3.6l-1.8,2.2z" fill="#1c7a28"/>
<rect x="287.1" y="23.799999999999997" width="3.6" height="1.2" fill="#777"/>
<rect x="287.1" y="26.4" width="3.6" height="1.2" fill="#777"/>
<rect x="287.1" y="28.799999999999997" width="3.6" height="1.2" fill="#777"/>
<rect x="287.1" y="31.0" width="8.4" height="1.7" fill="#b4b4b4"/>
<path d="M293.5,23.4v4.6" stroke="#1c7a28" stroke-width="1.3"/><path d="M291.7,27.4h3.6l-1.8,2.4z" fill="#1c7a28"/>
<rect x="1" y="42" width="13.3" height="17.8" rx="2.6" fill="#20437a"/>
<path d="M4.6,46.4v8l2,-1.9l1.3,2.9l1.4,-0.6l-1.3,-2.8h2.7z" fill="none" stroke="#fff" stroke-width="1.05" stroke-linejoin="round"/>
<rect x="4.6" y="66" width="3.6" height="3.6" fill="none" stroke="#fff" stroke-width="0.9"/><path d="M8.4,66.4h3.2M4.9,70v3.4" stroke="#999" stroke-width="0.7"/><path d="M9.4,71v4l3,-2z" fill="#fff"/>
<circle cx="7.2" cy="87.4" r="3" fill="none" stroke="#fff" stroke-width="1.1"/><rect x="7.4" y="88" width="4.6" height="4.4" fill="#353535" stroke="#fff" stroke-width="1.1"/>
<rect x="3.7" y="106.1" width="8.3" height="8.3" rx="0.8" fill="#fff"/><rect x="4.9" y="107.3" width="5.9" height="5.9" fill="#ff0a84"/>
<circle cx="7.8" cy="129.6" r="4.5" fill="#fff"/><circle cx="7.8" cy="129.6" r="3.1" fill="#c8146e"/>
<path d="M6.2,144.6l2.6,1.4l-0.2,2.8l-2.8,1l-2,-2.2l0.6,-2.4z" fill="#c8146e" stroke="#fff" stroke-width="0.9"/><path d="M10.2,148.2l0.9,1.6l1.8,0.3l-1.3,1.3l0.3,1.8l-1.7,-0.8l-1.6,0.8l0.3,-1.8l-1.3,-1.3l1.8,-0.3z" fill="#c8146e" stroke="#fff" stroke-width="0.8"/>
<path d="M7.8,163.4l4.2,2.2v5l-4.2,2.4l-4.2,-2.4v-5z" fill="#fff"/><path d="M4.8,166.8l2.6,1.4v3.2l-2.6,-1.5z" fill="#ff0a84"/><path d="M10.8,166.8l-2.6,1.4v3.2l2.6,-1.5z" fill="#c8146e"/>
<path d="M7.8,188.2a1.2,1.2 0 1 1 1.4,-1.2a2.6,2.6 0 1 1 -2.8,-2.4a4,4 0 1 1 -2.6,4.8" fill="none" stroke="#fff" stroke-width="1.1"/>
<path d="M5.6,211.4c0,-3 2,-5.6 5.6,-6.2" fill="none" stroke="#aaa" stroke-width="0.7"/><path d="M5.8,212.2l0.8,-4.2l3.6,-2.8l3,3.2l-3,3z" fill="#fff"/><circle cx="9.4" cy="208.6" r="0.9" fill="#353535"/><circle cx="4" cy="204.2" r="0.9" fill="#22c022"/><circle cx="4" cy="209.8" r="0.9" fill="#22c022"/>
<g transform="translate(0,-2.6)"><path d="M6.4,231.2l5,-5l1.8,1.8l-5,5l-2.4,0.6z" fill="#fff"/><path d="M3.6,223.6c1.6,0.2 2.4,1.4 2.2,2.8" fill="none" stroke="#22c022" stroke-width="0.9"/><circle cx="3.8" cy="223.6" r="0.9" fill="#22c022"/><circle cx="4.2" cy="232.2" r="0.9" fill="#22c022"/></g>
<g transform="translate(0,-2.6)"><path d="M5.6,251.4l6.6,-7.4l0.8,0.8l-5.8,7.8l-2,0.6z" fill="#fff"/><path d="M3.6,243.4c1.6,0.2 2.4,1.4 2.2,2.8" fill="none" stroke="#22c022" stroke-width="0.9"/><circle cx="4" cy="252.2" r="0.9" fill="#22c022"/><circle cx="3.8" cy="243.2" r="0.8" fill="#22c022"/></g>
<text x="2.7" y="269.8" font-size="10" font-weight="bold" fill="#fff" textLength="7.8" lengthAdjust="spacingAndGlyphs">A</text><rect x="11.4" y="261.4" width="1" height="9" fill="#22c022"/>
<defs><linearGradient id="g1" x1="0" y1="0" x2="0" y2="1"><stop offset="0" stop-color="#2a6fd0"/><stop offset="1" stop-color="#a8d0ff"/></linearGradient></defs><rect x="3.4" y="281.8" width="9" height="9.4" fill="url(#g1)" stroke="#fff" stroke-width="0.9"/>
<rect x="3.4" y="301.6" width="9" height="9.4" fill="#2a6fd0" stroke="#fff" stroke-width="0.9"/><path d="M3.4,306.2c3,-2 6,2 9,0M7.8,301.6c-2,3 2,6 0,9.4" fill="none" stroke="#cfe4ff" stroke-width="0.8"/>
<g transform="translate(8.2,326.2) scale(0.82) translate(-8.6,-326.6)"><path d="M5.4,329.4l4.4,-4.4l1.6,1.6l-4.4,4.4l-2.2,0.6z" fill="#fff"/><path d="M9.6,323.6l2.6,2.6l1,-1a1.8,1.8 0 0 0 -2.6,-2.6z" fill="#fff"/></g><path d="M4.8,321.8c-1.2,1.6 -1.4,2.8 0,3c1.4,-0.2 1.2,-1.4 0,-3z" fill="#2a9df4"/>
<rect x="1.5" y="355" width="13" height="0.6" fill="#2b2b2b"/>
<path d="M6,343.4l3.6,-3.6l3.6,3.6l-3.6,3.6z" fill="#fff"/><path d="M8.6,339.6a1.6,1.6 0 0 1 2.6,1.2" fill="none" stroke="#ddd" stroke-width="0.8"/><path d="M4.4,346.2c-1,1.4 -1.2,2.4 0,2.6c1.2,-0.2 1,-1.2 0,-2.6z" fill="#2a9df4" stroke="#2a9df4" stroke-width="0.6"/>
<path d="M3.2,370.2v-3.4c0.4,-2.6 2.6,-4.6 5,-4.4c1.6,0.2 2.4,1.4 2.2,2.6c-0.8,-0.8 -2.2,-0.6 -2.6,0.4c-0.2,1 0.8,1.6 2,1.4h2.2v3.4z" fill="#fff"/>
<path d="M4.6,381.6c1,-0.8 4.6,-0.8 5.8,0" fill="none" stroke="#999" stroke-width="0.8"/>
<path d="M802.2,50.6h4.6l2.8,2.8v5.4h-7.4z" fill="#fff" opacity="1"/>
<path d="M806.4,51v2.8h2.8" fill="none" stroke="#353535" stroke-width="0.7"/><rect x="804" y="55.2" width="2.6" height="1.4" fill="#353535"/><circle cx="810.2" cy="50.4" r="1.2" fill="#22c022"/>
<path d="M801.6,72h3.8l1,1.2h4.2v1.4h-7.2l-1.8,5.4z" fill="#fff" opacity="1"/>
<path d="M803.8,75.4h8l-1.8,5h-8z" fill="#fff" opacity="1"/>
<path d="M802,98h2.2l0.6,1.6h4.4l0.6,-1.6h2.2v5.4h-10z" fill="#fff" opacity="1"/>
<path d="M807,92.6v4" stroke="#22c022" stroke-width="1.5"/><path d="M804.6,96h4.8l-2.4,2.6z" fill="#22c022"/><rect x="803.4" y="100.8" width="7.2" height="0.9" fill="#353535"/>
<path d="M803.8,115h6.2v2.4h-6.2z" fill="#fff" opacity="1"/>
<path d="M802,118h9.8v4h-1.8v-1.6h-6.2v1.6h-1.8z" fill="#fff" opacity="1"/>
<path d="M804.4,121h5v3.4h-5z" fill="#fff" opacity="1"/>
<path d="M804,139.6h4.6l2.8,2.8v7.8h-7.4v-3.6h2v-2.2h-2z" fill="#fff" opacity="1"/>
<path d="M801.6,145.4h4.4" stroke="#22c022" stroke-width="1.3"/><path d="M805.4,143.4l2.4,2l-2.4,2z" fill="#22c022"/><path d="M808.2,140v2.8h2.8" fill="none" stroke="#353535" stroke-width="0.7"/>
<path d="M801.8,162h4.6l2.8,2.8v1.8h-2.4v2.2h2.4v3.6h-7.4z" fill="#fff" opacity="1"/>
<path d="M807,167.6h3.2" stroke="#22c022" stroke-width="1.3"/><path d="M809.6,165.6l2.4,2l-2.4,2z" fill="#22c022"/><path d="M806,162.4v2.8h2.8" fill="none" stroke="#353535" stroke-width="0.7"/>
<rect x="796" y="179.2" width="22" height="0.6" fill="#444"/>
<rect x="796" y="226.4" width="22" height="0.6" fill="#444"/>
<path d="M803.6,189.8h4.6a2.6,2.6 0 0 1 0,5.2h-1.8" fill="none" stroke="#fff" stroke-width="1.4"/><path d="M805.2,187.2v5.2l-3.2,-2.6z" fill="#fff"/>
<g opacity="0.3"><path d="M810.4,212h-4.6a2.6,2.6 0 0 0 0,5.2h1.8" fill="none" stroke="#fff" stroke-width="1.4"/><path d="M808.8,209.4v5.2l3.2,-2.6z" fill="#fff"/></g>
<rect x="801.8" y="233.8" width="6.6" height="6.6" rx="0.6" fill="#fff"/><rect x="805" y="237.2" width="7.2" height="7.2" rx="0.6" fill="#fff" stroke="#353535" stroke-width="0.9"/><rect x="806.4" y="238.6" width="4.4" height="4.4" fill="#bbb"/>
<path d="M803.4,256l5.6,7.4M810.6,256l-5.6,7.4" stroke="#fff" stroke-width="1.2"/><circle cx="803.8" cy="264.2" r="1.5" fill="none" stroke="#fff" stroke-width="1"/><circle cx="810.2" cy="264.2" r="1.5" fill="none" stroke="#fff" stroke-width="1"/>
<rect x="801.6" y="279.2" width="9.8" height="9.4" rx="1" fill="none" stroke="#fff" stroke-width="1"/><rect x="804.6" y="278.2" width="3.8" height="2" fill="#fff"/><rect x="803.8" y="281.8" width="5.4" height="5.2" fill="#ddd"/><rect x="805.2" y="283" width="2.6" height="2.8" fill="#666"/>
<rect x="796.4" y="297.4" width="20.700000000000045" height="20.0" rx="3" fill="#2f2f2f" stroke="#222" stroke-width="0.9"/>
<path d="M803.2,306h7.2l-3.6,3.8z" fill="#fff"/>
<rect x="786" y="207.29999999999998" width="2" height="1.8" fill="#fff"/>
<rect x="786" y="210.4" width="2" height="1.8" fill="#fff"/>
<rect x="786" y="213.29999999999998" width="2" height="1.8" fill="#fff"/>
<path d="M784.2,395.4l3.6,-3.7l3.6,3.7" fill="none" stroke="#6a6a6a" stroke-width="1.1"/>
<path d="M797.9,389.7l3.7,3.8l3.7,-3.8" fill="none" stroke="#fff" stroke-width="1.5"/>
<path d="M810.4,392.1h8.4M810.4,395.2h8.4M810.4,398.2h8.4" stroke="#fff" stroke-width="1.3"/>
<rect x="0" y="403.3" width="820" height="19.7" fill="#353535"/>
<text x="0.4" y="412" font-size="7.6" fill="#eeeeee" textLength="49.6" lengthAdjust="spacingAndGlyphs">Preenchimento:</text>
<text x="18.6" y="422" font-size="7.6" fill="#eeeeee" textLength="31.4" lengthAdjust="spacingAndGlyphs">Contorno:</text>
<text x="70.7" y="412" font-size="7.6" fill="#eeeeee" textLength="12.8" lengthAdjust="spacingAndGlyphs">N/D</text>
<text x="70.7" y="422" font-size="7.6" fill="#eeeeee" textLength="12.8" lengthAdjust="spacingAndGlyphs">N/D</text>
<text x="122" y="416.6" font-size="7.6" fill="#e6e6e6" textLength="7.4" lengthAdjust="spacingAndGlyphs">O:</text>
<rect x="133.5" y="404.7" width="42.30000000000001" height="21.30000000000001" rx="3" fill="#2f2f2f" stroke="#222" stroke-width="0.9"/>
<path d="M155.3,405.2V425.5M165.8,405.2V425.5" stroke="#262626" stroke-width="0.7"/>
<text x="137.6" y="416.6" font-size="7.6" fill="#8e8e8e" textLength="10.6" lengthAdjust="spacingAndGlyphs">100</text>
<path d="M157.15,415.35h6.8M167.4,415.35h6.8M170.8,411.95000000000005v6.8" stroke="#525252" stroke-width="0.9"/>
<rect x="182.8" y="409.4" width="1.9" height="9.4" fill="#3c8cf0"/>
<text x="188.3" y="416.6" font-size="7.6" fill="#f2f2f2" textLength="30.6" lengthAdjust="spacingAndGlyphs">Camada 1</text>
<path d="M231,414.8c2,-3 7.4,-3 9.4,0c-2,3 -7.4,3 -9.4,0z" fill="none" stroke="#fff" stroke-width="1.1"/><circle cx="235.7" cy="414.8" r="1.5" fill="#fff"/><path d="M232.6,411.6l-0.8,-1.2M235.7,410.8v-1.4M238.8,411.6l0.8,-1.2" stroke="#fff" stroke-width="0.9"/>
<rect x="253.8" y="413.4" width="6.4" height="5.4" rx="0.6" fill="#fff"/><path d="M257.4,413.6v-1.4a2.1,2.1 0 0 1 4.2,0v1.2" fill="none" stroke="#fff" stroke-width="1.1"/>
<text x="272.6" y="412" font-size="7.6" fill="#f0f0f0" textLength="353" lengthAdjust="spacingAndGlyphs">Nenhum objeto selecionado. <tspan font-weight="bold" fill="#ffffff">Clique</tspan>, <tspan font-weight="bold" fill="#ffffff">Shift+Clique</tspan>, <tspan font-weight="bold" fill="#ffffff">Alt+Rolar</tspan> o mouse sobre os objetos ou <tspan font-weight="bold" fill="#ffffff">arraste</tspan> em volta dos</text>
<text x="272.6" y="422" font-size="7.6" fill="#ececec" textLength="84.5" lengthAdjust="spacingAndGlyphs">objetos para selecioná-los.</text>
<text x="653.6" y="411.6" font-size="7.6" fill="#eeeeee" textLength="6.2" lengthAdjust="spacingAndGlyphs">X:</text>
<text x="653.6" y="421.8" font-size="7.6" fill="#eeeeee" textLength="6.2" lengthAdjust="spacingAndGlyphs">Y:</text>
<text x="668" y="411.6" font-size="7.6" fill="#eeeeee" textLength="19.8" lengthAdjust="spacingAndGlyphs">241,21</text>
<text x="668" y="421.8" font-size="7.6" fill="#eeeeee" textLength="19.8" lengthAdjust="spacingAndGlyphs">147,21</text>
<text x="694.9" y="416.6" font-size="7.6" fill="#eeeeee" textLength="6.2" lengthAdjust="spacingAndGlyphs">Z:</text>
<rect x="703.7" y="404.7" width="46.0" height="21.30000000000001" rx="3" fill="#2f2f2f" stroke="#222" stroke-width="0.9"/>
<path d="M729.5,405.2V425.5M740.3,405.2V425.5" stroke="#262626" stroke-width="0.7"/>
<text x="710.7" y="416.6" font-size="7.6" fill="#f2f2f2" textLength="13.8" lengthAdjust="spacingAndGlyphs">66%</text>
<path d="M731.5,415.35h6.8M741.6,415.35h6.8M745.0,411.95000000000005v6.8" stroke="#fff" stroke-width="0.9"/>
<text x="756.3" y="416.6" font-size="7.6" fill="#eeeeee" textLength="6.0" lengthAdjust="spacingAndGlyphs">R:</text>
<rect x="765.5" y="404.7" width="49.0" height="21.30000000000001" rx="3" fill="#2f2f2f" stroke="#222" stroke-width="0.9"/>
<path d="M795,405.2V425.5M805.3,405.2V425.5" stroke="#262626" stroke-width="0.7"/>
<text x="773.5" y="416.6" font-size="7.6" fill="#f2f2f2" textLength="16.2" lengthAdjust="spacingAndGlyphs">0,00°</text>
<path d="M796.75,415.35h6.8M806.5,415.35h6.8M809.9,411.95000000000005v6.8" stroke="#fff" stroke-width="0.9"/>
</svg></body></html>
